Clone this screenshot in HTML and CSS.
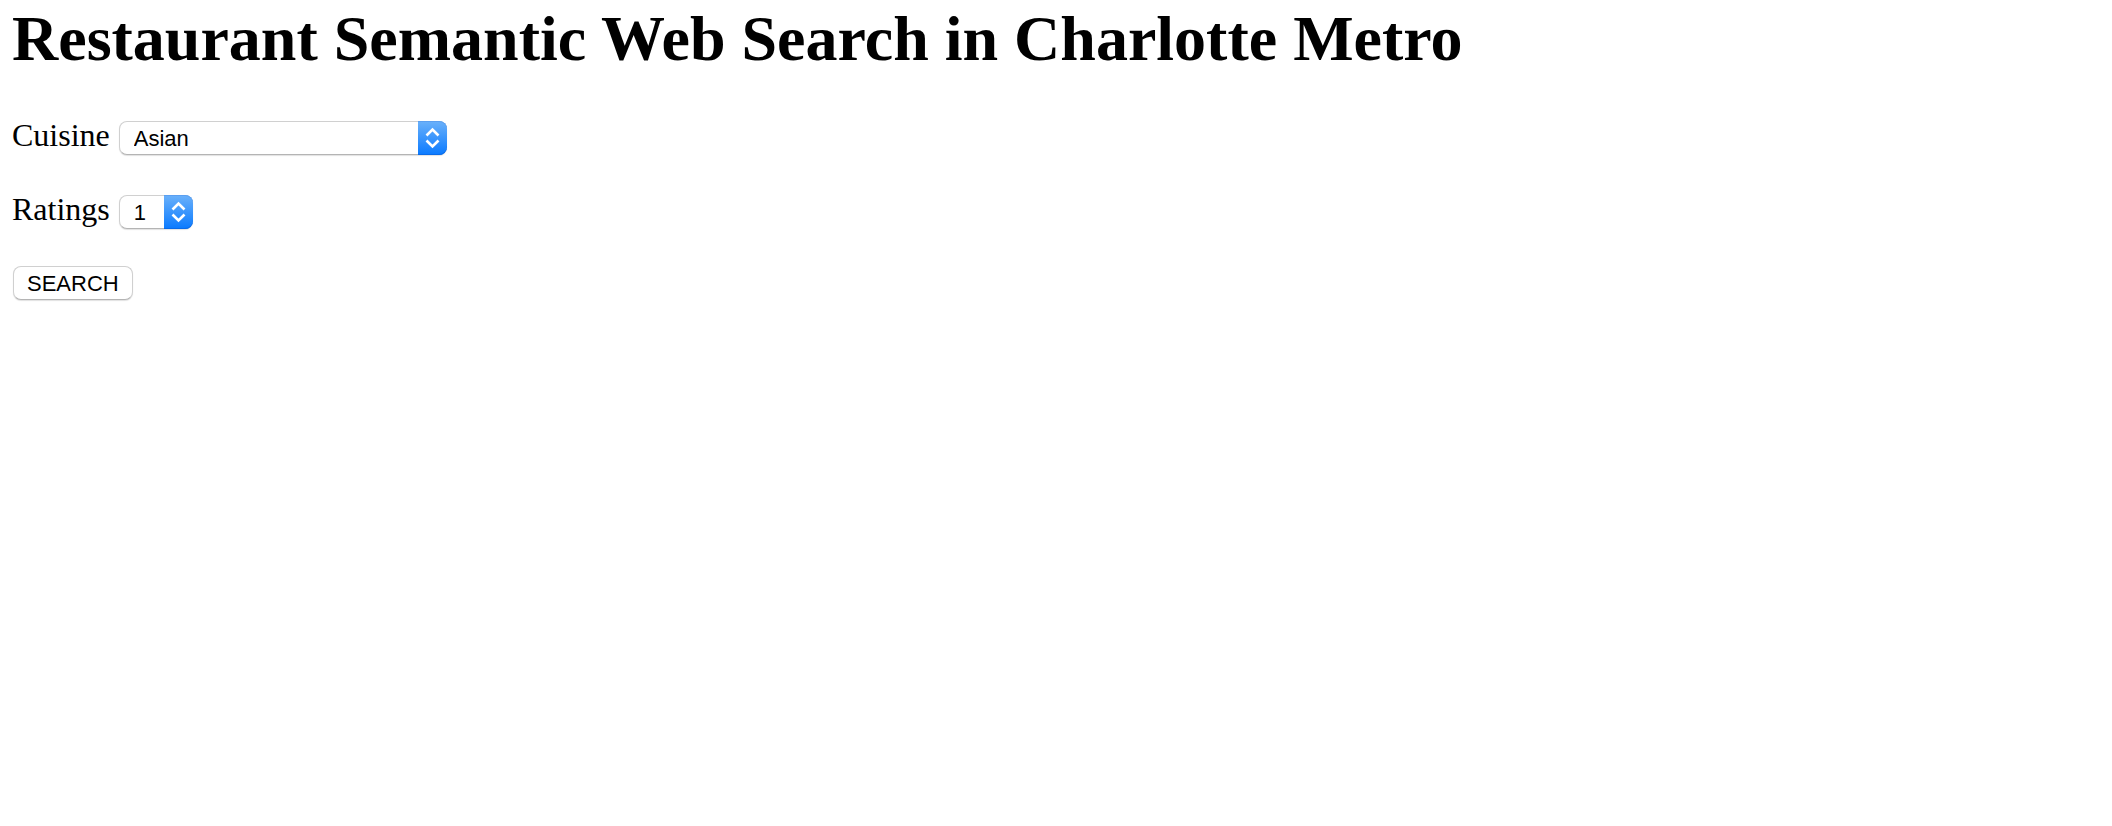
FILE: index.html
```html
<!DOCTYPE html>
<html lang="en">
<head>
<meta charset="utf-8">
<title>Restaurant Semantic Web Search</title>
<link rel="stylesheet" href="styles.css">
</head>
<body>
<h1 class="title">Restaurant Semantic Web Search in Charlotte Metro</h1>
<form class="search-form">
  <div class="field">
    <label for="cuisine">Cuisine</label>
    <span class="picker picker-wide">
      <select id="cuisine" name="cuisine">
        <option>Asian</option>
      </select>
      <span class="stepper"><svg viewBox="0 0 29 34" aria-hidden="true"><path d="M8.5 14.5 14.5 8.5 20.5 14.5M8.5 19.5 14.5 25.5 20.5 19.5"/></svg></span>
    </span>
  </div>
  <div class="field">
    <label for="ratings">Ratings</label>
    <span class="picker picker-narrow">
      <select id="ratings" name="ratings">
        <option>1</option>
      </select>
      <span class="stepper"><svg viewBox="0 0 29 34" aria-hidden="true"><path d="M8.5 14.5 14.5 8.5 20.5 14.5M8.5 19.5 14.5 25.5 20.5 19.5"/></svg></span>
    </span>
  </div>
  <button class="search-button" type="submit">SEARCH</button>
</form>
</body>
</html>
```
FILE: styles.css
```css
* {
  box-sizing: border-box;
}

body {
  margin: 0;
  padding: 2px 12px;
  background: #fff;
  color: #000;
  font: 32px/34px "Liberation Serif", "Times New Roman", serif;
}

.title {
  margin: 0 0 42px;
  font-size: 64px;
  line-height: 74px;
  font-weight: bold;
}

.search-form {
  display: flex;
  flex-direction: column;
  align-items: flex-start;
  gap: 36px;
}

.field {
  display: flex;
  align-items: flex-start;
  gap: 9px;
  height: 38px;
}

.picker {
  position: relative;
  display: block;
  margin-top: 3px;
}

.picker-wide {
  width: 328px;
}

.picker-narrow {
  width: 74px;
}

select,
.search-button {
  display: block;
  height: 34px;
  margin: 0;
  border: 1px solid #d0d0d0;
  border-bottom-color: #b4b4b4;
  border-radius: 8px;
  background: #fff;
  box-shadow: 0 1px 1px rgba(0, 0, 0, 0.12);
  color: #000;
  font: 22px/30px "Liberation Sans", Arial, sans-serif;
}

select {
  appearance: none;
  width: 100%;
  padding: 2px 30px 0 14px;
}

.stepper {
  position: absolute;
  top: 0;
  right: 0;
  width: 29px;
  height: 34px;
  border-radius: 0 8px 8px 0;
  background: linear-gradient(#6bb1fa, #0a7aff);
  box-shadow: inset 0 1px #5b9ff0, inset 0 -1px #0a6be8;
  pointer-events: none;
}

.stepper svg {
  display: block;
  width: 29px;
  height: 34px;
  fill: none;
  stroke: #fff;
  stroke-width: 2.6;
}

.search-button {
  margin-left: 1px;
  padding: 2px 13px 0;
}
```
